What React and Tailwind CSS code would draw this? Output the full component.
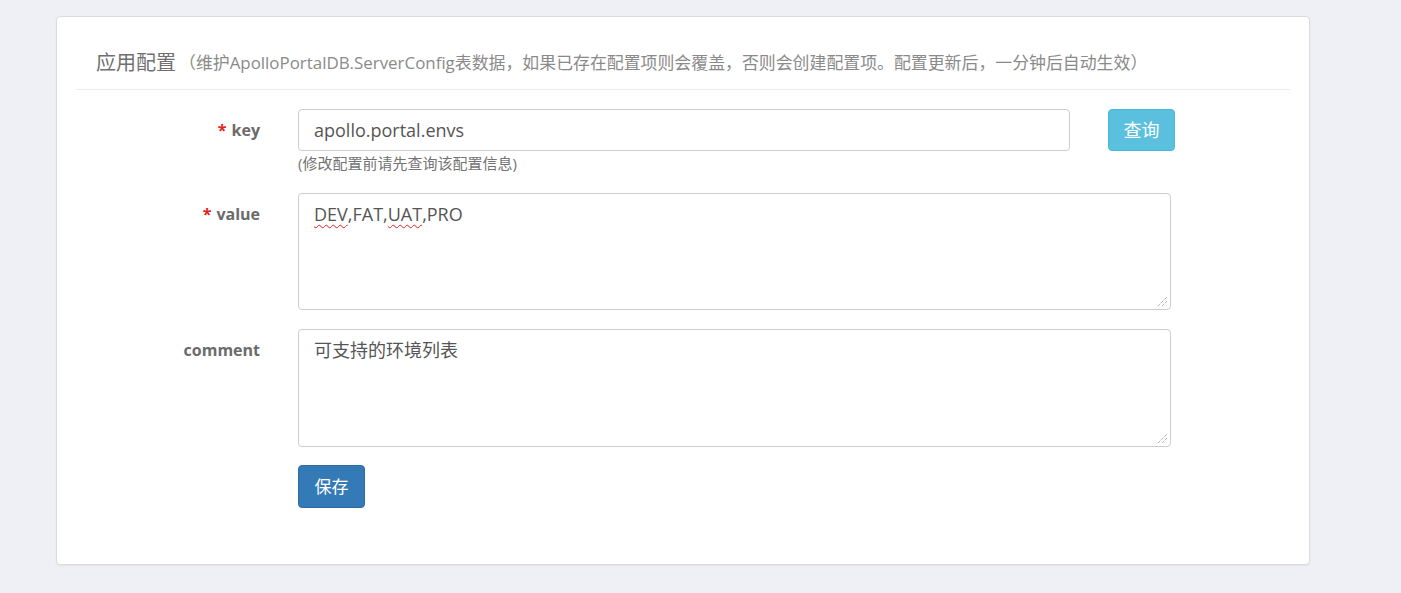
import React from "react";

const font = { fontFamily: '"Open Sans","Noto Sans CJK SC",sans-serif' };

function Grip() {
  return (
    <svg
      className="absolute right-[2px] bottom-[2px]"
      width="11"
      height="11"
      viewBox="0 0 11 11"
    >
      <line x1="1" y1="10" x2="10" y2="1" stroke="#8a8a8a" strokeWidth="1" strokeDasharray="1 1" />
      <line x1="5" y1="10" x2="10" y2="5" stroke="#8a8a8a" strokeWidth="1" strokeDasharray="1 1" />
    </svg>
  );
}

function Label({ required, children }) {
  return (
    <div className="w-[184px] shrink-0 text-right pt-[10px] text-[16px] font-bold text-[#6b6b6b] leading-[22px]">
      {required && <span className="text-[#e4211f] mr-[5px]">*</span>}
      {children}
    </div>
  );
}

export default function App() {
  return (
    <div className="min-h-[593px] w-full bg-[#eff0f5] pt-[16px]" style={font}>
      <div className="ml-[56px] w-[1254px] h-[549px] bg-white border border-[#dcdcdc] rounded-[4px] shadow-[0_1px_2px_rgba(0,0,0,0.06)] px-[19px]">
        <div className="h-[73px] border-b border-[#ececec] flex items-center pl-[20px] pt-[19px]">
          <span className="text-[20px] text-[#707070]">应用配置</span>
          <span className="ml-[3px] text-[16.9px] text-[#8a8a8a]">
            （维护ApolloPortalDB.ServerConfig表数据，如果已存在配置项则会覆盖，否则会创建配置项。配置更新后，一分钟后自动生效）
          </span>
        </div>

        <div className="pt-[19px]">
          <div className="flex">
            <Label required>key</Label>
            <div className="ml-[38px]">
              <div className="w-[772px] h-[42px] border border-[#cccccc] rounded-[4px] flex items-center pl-[15px] text-[18px] text-[#555]">
                apollo.portal.envs
              </div>
              <div className="mt-[2px] text-[15px] text-[#737373] leading-[20px]">
                (修改配置前请先查询该配置信息)
              </div>
            </div>
            <button className="ml-[38px] w-[67px] h-[42px] rounded-[4px] bg-[#5bc0de] border border-[#46b8da] text-white text-[18px]">
              查询
            </button>
          </div>

          <div className="flex mt-[20px]">
            <Label required>value</Label>
            <div className="ml-[38px] relative w-[873px] h-[117px] border border-[#cccccc] rounded-[4px] pl-[15px] pt-[7px] text-[18px] text-[#555] leading-[26px]">
              <span className="underline decoration-wavy decoration-[#e02020] decoration-1 underline-offset-[3px]">DEV</span>,FAT,
              <span className="underline decoration-wavy decoration-[#e02020] decoration-1 underline-offset-[3px]">UAT</span>,PRO
              <Grip />
            </div>
          </div>

          <div className="flex mt-[19px]">
            <Label>comment</Label>
            <div className="ml-[38px] relative w-[873px] h-[118px] border border-[#cccccc] rounded-[4px] pl-[15px] pt-[7px] text-[18px] text-[#555] leading-[26px]">
              可支持的环境列表
              <Grip />
            </div>
          </div>

          <div className="flex mt-[18px]">
            <div className="w-[184px] shrink-0" />
            <button className="ml-[38px] w-[67px] h-[43px] rounded-[4px] bg-[#337ab7] border border-[#2e6da4] text-white text-[17px]">
              保存
            </button>
          </div>
        </div>
      </div>
    </div>
  );
}
